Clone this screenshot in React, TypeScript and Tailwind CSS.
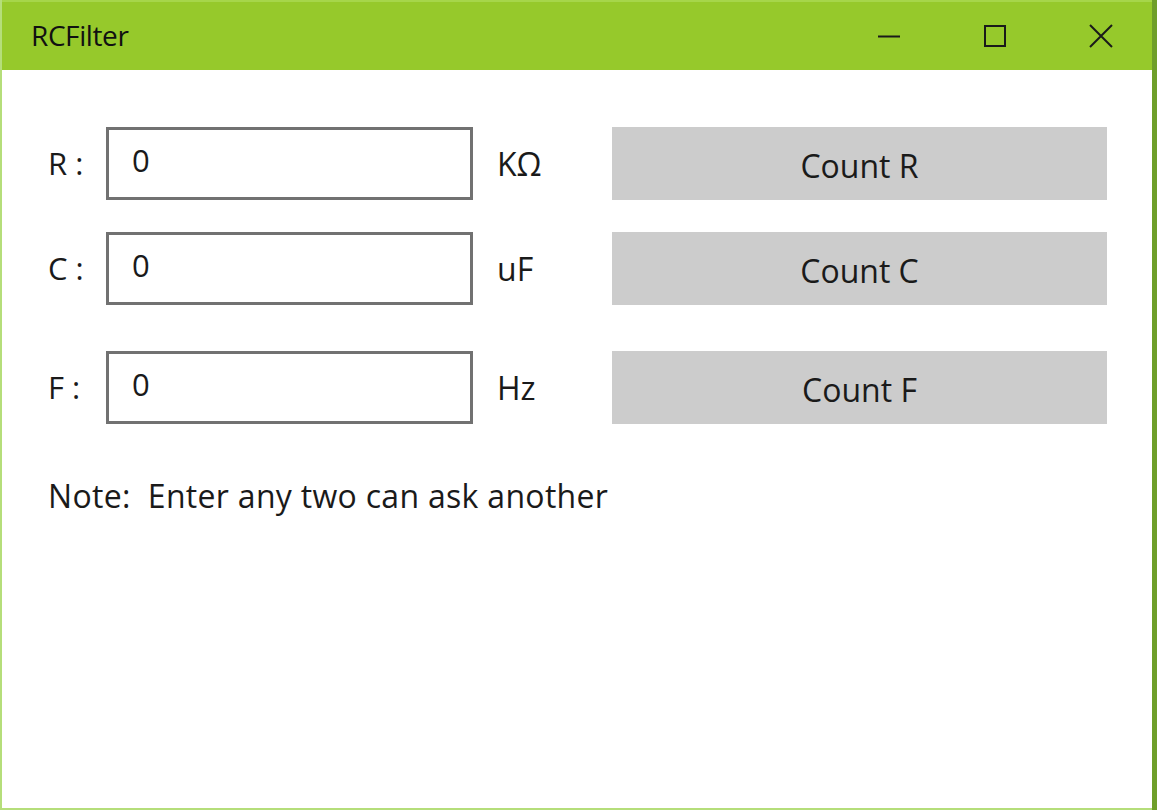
import React from 'react';

const rows = [
  { label: 'R :', unit: 'KΩ', button: 'Count R', mt: 'mt-0' },
  { label: 'C :', unit: 'uF', button: 'Count C', mt: 'mt-[32px]' },
  { label: 'F :', unit: 'Hz', button: 'Count F', mt: 'mt-[46px]' },
];

export default function App() {
  return (
    <div
      className="w-[1157px] h-[810px] bg-[#6f9f2a] overflow-hidden"
      style={{ fontFamily: '"Open Sans", "Noto Sans", sans-serif' }}
    >
      <div className="w-[1152px] h-[810px] flex flex-col bg-white border-l-2 border-b-2 border-[#b5de7a]">
        {/* Title bar */}
        <div className="h-[70px] bg-[#96c92b] border-t-2 border-[#a6d64a] flex items-center">
          <span className="ml-[29px] mb-[3px] text-[28px] text-[#111] tracking-[-0.4px]">RCFilter</span>
          <div className="ml-auto flex items-center h-full">
            <div className="w-[106px] h-full flex items-center justify-center">
              <svg width="24" height="24" viewBox="0 0 24 24">
                <path d="M1 12.5H23" stroke="#1a1a1a" strokeWidth="2" />
              </svg>
            </div>
            <div className="w-[106px] h-full flex items-center justify-center">
              <svg width="24" height="24" viewBox="0 0 24 24">
                <rect x="2" y="2" width="20" height="20" fill="none" stroke="#1a1a1a" strokeWidth="2" />
              </svg>
            </div>
            <div className="w-[106px] h-full flex items-center justify-center mr-[-2px]">
              <svg width="26" height="26" viewBox="0 0 26 26">
                <path d="M2 2L24 24M24 2L2 24" stroke="#1a1a1a" strokeWidth="2" />
              </svg>
            </div>
          </div>
        </div>

        {/* Body */}
        <div className="pt-[57px] pl-[46px] text-[#1a1a1a]">
          {rows.map((r) => (
            <div key={r.label} className={`flex items-center h-[73px] ${r.mt}`}>
              <span className="w-[58px] text-[31px] leading-none">{r.label}</span>
              <div className="w-[367px] h-[73px] border-[3px] border-[#717171] flex items-center pb-[6px] pl-[23px] text-[31px] leading-none">
                0
              </div>
              <span className="w-[139px] pl-[24px] text-[32px] leading-none">{r.unit}</span>
              <div className="w-[495px] h-[73px] bg-[#cccccc] flex items-center justify-center text-[32px] leading-none pt-[4px]">
                {r.button}
              </div>
            </div>
          ))}
          <div className="mt-[56px] text-[32px] tracking-[0.3px] leading-none">Note:&nbsp; Enter any two can ask another</div>
        </div>
      </div>
    </div>
  );
}
